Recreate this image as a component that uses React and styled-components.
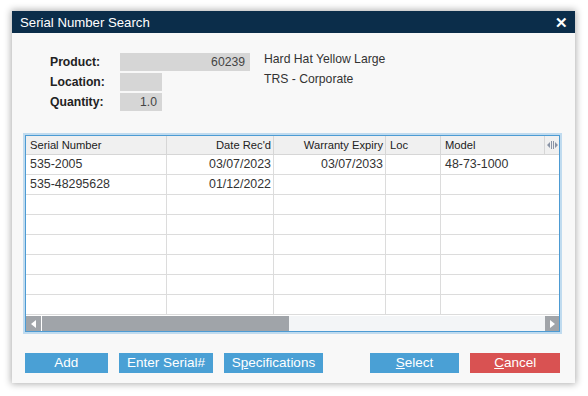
import styled, { createGlobalStyle } from 'styled-components';

const GlobalStyle = createGlobalStyle`
  *, *::before, *::after {
    box-sizing: border-box;
  }
  html, body {
    margin: 0;
    padding: 0;
    background: #ffffff;
  }
  body {
    font-family: "Liberation Sans", Arial, sans-serif;
    color: #222;
  }
`;

const Page = styled.div`
  width: 588px;
  height: 396px;
  padding: 11px 0 0 12px;
`;

const Dialog = styled.div`
  width: 563px;
  height: 372px;
  background: #f8f8f8;
  box-shadow: 0 0 7px 1px rgba(0, 0, 0, 0.32);
  display: flex;
  flex-direction: column;
`;

const TitleBar = styled.div`
  height: 22px;
  background: #0b2d4a;
  color: #fff;
  display: flex;
  align-items: center;
  justify-content: space-between;
  padding: 0 7px 0 8px;
  font-size: 13.2px;
`;

const Close = styled.span`
  font-weight: bold;
  font-size: 15px;
  line-height: 1;
`;

const Body = styled.div`
  flex: 1;
  display: flex;
  flex-direction: column;
  padding: 20px 15px 10px 13px;
`;

const Form = styled.div`
  display: grid;
  grid-template-columns: 70px 144px auto;
  grid-auto-rows: 18px;
  row-gap: 2px;
  padding-left: 25px;
  font-size: 12.2px;
  align-items: center;
`;

const Label = styled.span`
  grid-column: 1;
  font-weight: bold;
  color: #222;
`;

const Field = styled.div`
  grid-column: 2;
  width: ${({ $w }) => $w}px;
  height: 18px;
  background: #d6d6d6;
  color: #444;
  text-align: right;
  padding-right: 5px;
  line-height: 18px;
  font-size: 12.2px;
`;

const Desc = styled.span`
  grid-column: 3;
  color: #333;
  position: relative;
  top: -3px;
`;

const GridBox = styled.div`
  margin-top: 24px;
  height: 197px;
  border: 1px solid #4d9bd3;
  outline: 2px solid #c0dbef;
  background: #fff;
  display: flex;
  flex-direction: column;
  overflow: hidden;
`;

const Rows = styled.div`
  flex: 1;
  overflow: hidden;
`;

const Table = styled.div`
  display: grid;
  grid-template-columns: 141px 107px 112px 55px 104px 14px;
  grid-template-rows: 19px;
  grid-auto-rows: 20px;
`;

const Head = styled.div`
  background: #f0f0f0;
  border-right: ${({ $icon }) => ($icon ? 'none' : '1px solid #d6d6d6')};
  border-bottom: 1px solid #d6d6d6;
  padding: ${({ $icon }) => ($icon ? '0' : '0 2px 0 4px')};
  font-size: 11.2px;
  color: #222;
  white-space: nowrap;
  overflow: hidden;
  display: flex;
  align-items: center;
  justify-content: ${({ $right, $icon }) =>
    $icon ? 'center' : $right ? 'flex-end' : 'flex-start'};
`;

const Cell = styled.div`
  grid-column: span ${({ $span }) => $span || 1};
  border-right: ${({ $span }) => ($span ? 'none' : '1px solid #dcdcdc')};
  border-bottom: 1px solid #dcdcdc;
  text-align: ${({ $right }) => ($right ? 'right' : 'left')};
  padding: 0 2px 0 4px;
  line-height: 18px;
  font-size: 12.4px;
  color: #333;
  white-space: nowrap;
  overflow: hidden;
`;

const Scrollbar = styled.div`
  height: 15px;
  display: flex;
  background: #f3f5f7;
`;

const ArrowBtn = styled.div`
  width: ${({ $left }) => ($left ? 16 : 14)}px;
  background: #a0a4a9;
  display: flex;
  align-items: center;
  justify-content: center;
  border-right: ${({ $left }) => ($left ? '1px solid #fff' : 'none')};
`;

const Thumb = styled.div`
  width: 247px;
  background: #a0a4a9;
`;

const Track = styled.div`
  flex: 1;
`;

const Buttons = styled.div`
  margin-top: auto;
  display: flex;
  align-items: center;
`;

const Button = styled.button`
  height: 20px;
  width: ${({ $w }) => $w}px;
  margin-left: ${({ $ml }) => $ml || 0}px;
  border: none;
  padding: 0;
  background: ${({ $danger }) => ($danger ? '#d95252' : '#4aa0d5')};
  color: #fff;
  font-family: "Liberation Sans", Arial, sans-serif;
  font-size: 13.5px;
  line-height: 20px;
  u {
    text-decoration: underline;
    text-underline-offset: 1px;
  }
`;

const ResizeIcon = () => (
  <svg width="11" height="10" viewBox="0 0 11 10">
    <path d="M4.5 1v8M6.5 1v8" stroke="#8a94a6" strokeWidth="1" />
    <path d="M0 5l3-3v6zM11 5l-3-3v6z" fill="#8a94a6" />
  </svg>
);

const Tri = ({ dir }) => (
  <svg width="7" height="8" viewBox="0 0 7 8">
    <path d={dir === 'left' ? 'M6 0v8L1 4z' : 'M1 0v8l5-4z'} fill="#fff" />
  </svg>
);

const data = [
  ['535-2005', '03/07/2023', '03/07/2033', '', '48-73-1000'],
  ['535-48295628', '01/12/2022', '', '', ''],
];
const rightCols = [false, true, true, false, false];

export default function App() {
  const rows = [...data];
  while (rows.length < 8) rows.push(['', '', '', '', '']);

  return (
    <>
      <GlobalStyle />
      <Page>
        <Dialog>
          <TitleBar>
            <span>Serial Number Search</span>
            <Close>✕</Close>
          </TitleBar>
          <Body>
            <Form>
              <Label>Product:</Label>
              <Field $w={130}>60239</Field>
              <Desc>Hard Hat Yellow Large</Desc>
              <Label>Location:</Label>
              <Field $w={42}></Field>
              <Desc>TRS - Corporate</Desc>
              <Label>Quantity:</Label>
              <Field $w={42}>1.0</Field>
            </Form>

            <GridBox>
              <Rows>
                <Table>
                  <Head>Serial Number</Head>
                  <Head $right>Date Rec'd</Head>
                  <Head $right>Warranty Expiry</Head>
                  <Head>Loc</Head>
                  <Head>Model</Head>
                  <Head $icon>
                    <ResizeIcon />
                  </Head>
                  {rows.map((r, i) =>
                    r.map((v, j) => (
                      <Cell
                        key={`${i}-${j}`}
                        $right={rightCols[j]}
                        $span={j === 4 ? 2 : 0}
                      >
                        {v}
                      </Cell>
                    ))
                  )}
                </Table>
              </Rows>
              <Scrollbar>
                <ArrowBtn $left>
                  <Tri dir="left" />
                </ArrowBtn>
                <Thumb />
                <Track />
                <ArrowBtn>
                  <Tri dir="right" />
                </ArrowBtn>
              </Scrollbar>
            </GridBox>

            <Buttons>
              <Button $w={83}>Add</Button>
              <Button $w={95} $ml={11}>Enter Serial#</Button>
              <Button $w={99} $ml={11}>
                S<u>p</u>ecifications
              </Button>
              <Button $w={90} $ml={47}>
                <u>S</u>elect
              </Button>
              <Button $w={90} $ml={11} $danger>
                <u>C</u>ancel
              </Button>
            </Buttons>
          </Body>
        </Dialog>
      </Page>
    </>
  );
}
